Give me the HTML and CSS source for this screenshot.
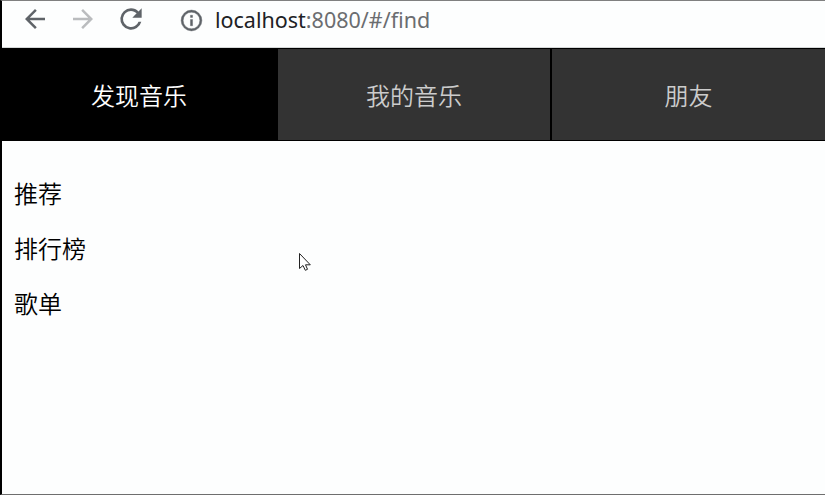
FILE: index.html
```html
<!DOCTYPE html>
<html lang="zh-CN">
<head>
<meta charset="utf-8">
<title>发现音乐</title>
<link rel="stylesheet" href="styles.css">
</head>
<body>
<div class="window">
  <header class="toolbar">
    <svg class="icon back" viewBox="0 0 24 24"><path d="M20 11H7.83l5.59-5.59L12 4l-8 8 8 8 1.41-1.41L7.83 13H20v-2z"/></svg>
    <svg class="icon forward" viewBox="0 0 24 24"><path d="M12 4l-1.41 1.41L16.17 11H4v2h12.17l-5.58 5.59L12 20l8-8z"/></svg>
    <svg class="icon reload" viewBox="0 0 24 24"><path d="M17.65 6.35A7.96 7.96 0 0 0 12 4a8 8 0 1 0 7.73 10h-2.08A6 6 0 1 1 12 6c1.66 0 3.14.69 4.22 1.78L13 11h7V4l-2.35 2.35z"/></svg>
    <svg class="icon info" viewBox="0 0 24 24"><path d="M11 7h2v2h-2zm0 4h2v6h-2zm1-9a10 10 0 1 0 0 20 10 10 0 0 0 0-20zm0 18a8 8 0 1 1 0-16 8 8 0 0 1 0 16z"/></svg>
    <div class="url"><span class="host">localhost</span>:8080/#/find</div>
  </header>
  <nav class="tabs">
    <a class="tab active">发现音乐</a>
    <a class="tab">我的音乐</a>
    <a class="tab">朋友</a>
  </nav>
  <main class="content">
    <p>推荐</p>
    <p>排行榜</p>
    <p>歌单</p>
  </main>
  <svg class="cursor" viewBox="0 0 14 20"><path d="M1.5 1.5V16.5L5 13.5L7.3 18.3L9.5 17.3L7.5 12.8H12.3Z"/></svg>
</div>
</body>
</html>
```
FILE: styles.css
```css
* { box-sizing: border-box; }
body { margin: 0; }
.window {
  position: relative;
  display: flex;
  flex-direction: column;
  width: 825px;
  height: 495px;
  overflow: hidden;
  border-left: 2px solid #000;
  border-top: 1px solid #808080;
  border-bottom: 1px solid #6e6e6e;
  background: #fdfefe;
  font-family: "Noto Sans CJK SC", sans-serif;
}
.toolbar {
  display: flex;
  align-items: center;
  height: 47px;
  padding: 0 0 9px 18px;
  border-bottom: 1px solid #d5d8d8;
}
.icon { flex: none; width: 30px; height: 30px; margin-bottom: 1px; fill: #5f6368; }
.forward { margin-left: 18px; fill: #babcbe; }
.reload { margin-left: 17px; width: 32px; height: 32px; }
.info {
  margin: 1px 0 0 32px;
  width: 25px;
  height: 25px;
  stroke: #5f6368;
  stroke-width: 0.4;
}
.url {
  margin-left: 11px;
  font-family: "Noto Sans", "Open Sans", sans-serif;
  font-size: 21.5px;
  line-height: 36px;
  color: #6b6d70;
}
.host { color: #202124; }
.tabs {
  display: grid;
  grid-template-columns: 274px 272px 273px;
  gap: 2px;
  height: 93px;
  padding: 1px 0;
  background: #000;
}
.tab {
  display: flex;
  align-items: center;
  justify-content: center;
  font-size: 24px;
  line-height: 36px;
  font-weight: 350;
  color: #ccc;
  background: #333;
}
.tab.active { color: #fff; background: #000; }
.content { padding: 34px 12px; font-size: 24px; color: #000; }
.content p { margin: 0 0 19px; line-height: 36px; font-weight: 350; }
.cursor {
  position: absolute;
  left: 296px;
  top: 251px;
  width: 14px;
  height: 20px;
  fill: #fff;
  stroke: #222;
}
```
